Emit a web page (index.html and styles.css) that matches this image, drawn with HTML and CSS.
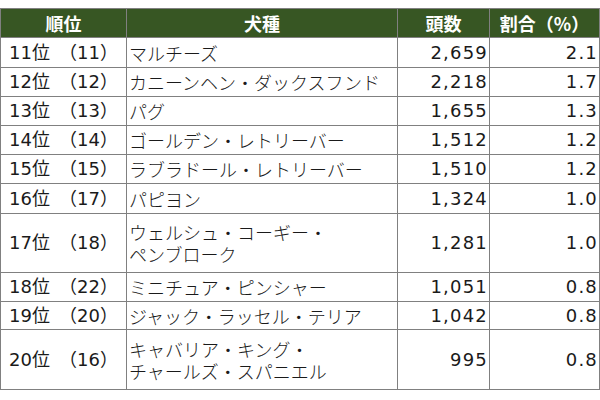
FILE: index.html
```html
<!DOCTYPE html>
<html lang="ja">
<head>
<meta charset="utf-8">
<link rel="stylesheet" href="styles.css">
</head>
<body>
<table class="rank">
  <colgroup>
    <col class="c-rank"><col class="c-breed"><col class="c-num"><col class="c-pct">
  </colgroup>
  <thead>
    <tr class="h"><th>順位</th><th>犬種</th><th>頭数</th><th>割合（%）</th></tr>
  </thead>
  <tbody>
    <tr class="r30"><td class="rk">11位　（11）</td><td class="br">マルチーズ</td><td class="n">2,659</td><td class="n">2.1</td></tr>
    <tr class="r29"><td class="rk">12位　（12）</td><td class="br">カニーンヘン・ダックスフンド</td><td class="n">2,218</td><td class="n">1.7</td></tr>
    <tr class="r29"><td class="rk">13位　（13）</td><td class="br">パグ</td><td class="n">1,655</td><td class="n">1.3</td></tr>
    <tr class="r29"><td class="rk">14位　（14）</td><td class="br">ゴールデン・レトリーバー</td><td class="n">1,512</td><td class="n">1.2</td></tr>
    <tr class="r29"><td class="rk">15位　（15）</td><td class="br">ラブラドール・レトリーバー</td><td class="n">1,510</td><td class="n">1.2</td></tr>
    <tr class="r30"><td class="rk">16位　（17）</td><td class="br">パピヨン</td><td class="n">1,324</td><td class="n">1.0</td></tr>
    <tr class="r59"><td class="rk">17位　（18）</td><td class="br">ウェルシュ・コーギー・<br>ペンブローク</td><td class="n">1,281</td><td class="n">1.0</td></tr>
    <tr class="r29"><td class="rk">18位　（22）</td><td class="br">ミニチュア・ピンシャー</td><td class="n">1,051</td><td class="n">0.8</td></tr>
    <tr class="r28"><td class="rk">19位　（20）</td><td class="br">ジャック・ラッセル・テリア</td><td class="n">1,042</td><td class="n">0.8</td></tr>
    <tr class="r60"><td class="rk">20位　（16）</td><td class="br">キャバリア・キング・<br>チャールズ・スパニエル</td><td class="n">995</td><td class="n">0.8</td></tr>
  </tbody>
</table>
</body>
</html>
```

FILE: styles.css
```css
html, body {
  margin: 0;
  padding: 0;
  background: #ffffff;
}
body {
  padding-top: 8px;
  font-family: "DejaVu Sans", "Noto Sans CJK JP", sans-serif;
  font-size: 18px;
  color: #1a1a1a;
}
.rank {
  border-collapse: collapse;
  table-layout: fixed;
  width: 599px;
}
.c-rank { width: 126px; }
.c-breed { width: 271px; }
.c-num { width: 92px; }
.c-pct { width: 110px; }
.rank th, .rank td {
  border: 1px solid #808080;
  padding: 0 2px;
  line-height: 22px;
  vertical-align: middle;
  white-space: nowrap;
  overflow: hidden;
}
.rank th {
  background: #375623;
  color: #ffffff;
  font-weight: bold;
  text-align: center;
  font-family: "Noto Sans CJK JP", sans-serif;
  font-size: 18px;
}
.rank .h { height: 29px; }
.r28 { height: 28px; }
.r29 { height: 29px; }
.r30 { height: 30px; }
.r59 { height: 59px; }
.r60 { height: 60px; }
.rk { text-align: center; }
.br {
  text-align: left;
  font-family: "Noto Sans CJK JP", sans-serif;
  font-weight: 300;
}
.n {
  text-align: right;
  letter-spacing: 1.2px;
}
.rank td.n { padding-right: 1px; }
```
